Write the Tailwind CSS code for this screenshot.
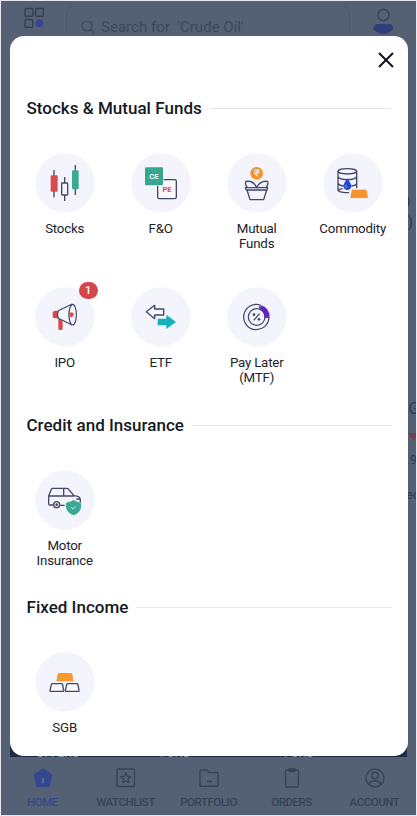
<!DOCTYPE html>
<html lang="en">
<head>
<meta charset="utf-8">
<title>Products</title>
<script src="https://cdn.jsdelivr.net/npm/@tailwindcss/browser@4"></script>
</head>
<body class="bg-[#e9eaf0] font-[Roboto,sans-serif]">
<div class="relative w-[417px] h-[816px] overflow-hidden pt-px px-px">
  <!-- Dimmed home screen -->
  <div class="flex flex-col h-[814px] bg-[#546073] text-[#2f3b50]">
    <header class="flex h-[60px] pl-[23px] pr-[21px] pt-[5px] justify-between">
      <svg class="w-[22px] h-[22px] mt-px" viewBox="0 0 22 22" fill="none" stroke="#333f55" stroke-width="1.4"><rect x="1" y="1.500" width="7.800" height="7.800" rx="1"/><rect x="11.500" y="1.500" width="7.800" height="7.800" rx="1"/><rect x="1" y="12.500" width="7.800" height="7.800" rx="1"/><circle cx="15.400" cy="16.200" r="3.800" fill="#334690" stroke="none"/></svg>
      <div class="flex gap-[6px] w-[284px] h-[50px] pl-[14px] pt-[10px] mr-px rounded-lg border border-[#4e5a6d] text-[#3c485b] text-[15px] tracking-[.02px] leading-[20px] whitespace-pre">
        <svg class="w-[14px] h-[14px] mt-[3px]" viewBox="0 0 14 14" fill="none" stroke="#3c485b" stroke-width="1.2"><circle cx="6" cy="6" r="5"/><path d="M9.700 9.700L13 13"/></svg><span>Search for  'Crude Oil'</span>
      </div>
      <svg class="w-[24px] h-[30px] mt-[1px]" viewBox="0 0 24 30"><circle cx="12.500" cy="8" r="5.600" fill="none" stroke="#333f55" stroke-width="1.2"/><path d="M5 17h15q2 2 2.500 5-5 5-10 5t-10.500-5q1-3 3-5z" fill="#2f4079"/></svg>
    </header>
    <main class="flex-1 flex flex-col items-end overflow-hidden text-[14px] leading-[20px]">
      <div class="h-[131px]"></div>
      <div class="h-5 mr-[6px]">0</div>
      <div class="h-5 mr-[3px]">%)</div>
      <div class="h-[167px]"></div>
      <div class="w-[17px] h-[20px] overflow-hidden text-[16px]">SGB</div>
      <div class="h-[28px] w-[8px] pt-[14px]"><svg class="w-3 h-2" viewBox="0 0 12 8"><path d="M0 0h12L6 8z" fill="#75404f"/></svg></div>
      <div class="h-[22px] w-[17px] overflow-hidden pt-[4px] text-[13px] leading-[18px]">1.95</div>
      <div class="w-[10px] h-[36px] pt-[16px] overflow-hidden text-[13px] leading-[20px]">ed</div>
      <div class="flex-1"></div>
      <div class="flex items-end w-[397px] h-[14px] mr-[9px] pl-[26px] bg-[#1c2b44] text-[#8490a2] text-[12px] leading-[8px] shrink-0"><span class="w-[124px]">OFFERS</span><span class="w-[124px]">FUND</span><span>FUND</span></div>
    </main>
    <nav class="grid grid-cols-5 h-[58px] text-[11.500px] font-medium leading-[14px] tracking-[-.45px] text-[#364257]">
      <div class="flex flex-col items-center pt-[11px] gap-[7px] text-[#34488f]"><svg class="w-5 h-5" viewBox="0 0 20 20"><path d="M9 .8q1-.7 2 0L18.500 6q1 .8.700 2l-2.200 9.500q-.3 1.500-1.800 1.500H4.800Q3.300 19 3 17.500L.8 8q-.3-1.200.7-2z" fill="#34488f"/><path d="M10 10v5" stroke="#7984a6" stroke-width="1.2"/></svg><span>HOME</span></div>
      <div class="flex flex-col items-center pt-[11px] gap-[7px]"><svg class="w-5 h-5" viewBox="0 0 20 20" fill="none" stroke="#364257" stroke-width="1.4"><rect x="1" y="1" width="17.500" height="17.500" rx="1"/><path stroke-linejoin="round" d="M9.800 5l1.500 3.200 3.400.5-2.500 2.400.6 3.400-3-1.600-3 1.600.6-3.400-2.500-2.400 3.400-.5z"/></svg><span>WATCHLIST</span></div>
      <div class="flex flex-col items-center pt-[11px] gap-[7px]"><svg class="w-5 h-5" viewBox="0 0 20 20" fill="none" stroke="#364257" stroke-width="1.4" stroke-linejoin="round"><path d="M2 2h6l2 2.500h8q1 0 1 1V17q0 1.300-1 1.300H2q-1 0-1-1.300V3q0-1 1-1zM8 13.500h5"/></svg><span>PORTFOLIO</span></div>
      <div class="flex flex-col items-center pt-[11px] gap-[7px]"><svg class="w-5 h-5" viewBox="0 0 20 20" fill="none" stroke="#364257" stroke-width="1.4"><rect x="3.500" y="2" width="13" height="17" rx="1.500"/><path d="M6 1.500Q6 .3 7.500.3h5q1.500 0 1.500 1.200 0 2.500-2 2.500H8Q6 4 6 1.500z" fill="#364257" stroke="none"/></svg><span>ORDERS</span></div>
      <div class="flex flex-col items-center pt-[11px] gap-[7px]"><svg class="w-5 h-5" viewBox="0 0 20 20" fill="none" stroke="#364257" stroke-width="1.4"><circle cx="10" cy="10" r="9"/><circle cx="10" cy="7.500" r="3.300"/><path d="M4 16.500q1.500-3.700 6-3.700t6 3.700"/></svg><span>ACCOUNT</span></div>
    </nav>
  </div>

  <!-- Product sheet -->
  <section class="absolute left-[9.500px] top-[36px] w-[398px] h-[719.500px] rounded-[14px] bg-white text-[#20242c]">
    <div class="flex justify-end h-[62px] pt-[16px] pr-[13.500px]">
      <svg class="w-[16px] h-[16px]" viewBox="0 0 16 16" fill="none" stroke="#10141c" stroke-width="2"><path d="M1 1l14 14M15 1L1 15"/></svg>
    </div>
    <div class="flex items-center gap-[9px] pl-[17px] pr-[17px] h-[20px]">
      <h2 class="text-[17px] font-medium tracking-[.02px] leading-[20px] text-[#151922] whitespace-nowrap">Stocks &amp; Mutual Funds</h2><div class="flex-1 h-px bg-[#e4e5e8]"></div>
    </div>
    <div class="grid grid-cols-4 w-[384px] ml-[7.200px] pt-[35px] text-center text-[13.300px] leading-[15px] tracking-[-.2px]">
      <div class="flex flex-col items-center h-[134px] gap-[8px]">
        <svg class="w-[60px] h-[60px] shrink-0" viewBox="46 188 180 180"><circle cx="136" cy="278" r="89" fill="#f4f5fc"/><g stroke="#41466c" stroke-width="4"><path d="M103 239v82M135 260v72M167 224v90"/><rect x="126" y="278" width="18" height="36" rx="2" fill="#f4f5fc"/></g><rect x="93" y="255" width="21" height="49" rx="3" fill="#d94a4d"/><rect x="157" y="240" width="20" height="57" rx="3" fill="#3aaa92"/></svg>
        <span>Stocks</span>
      </div>
      <div class="flex flex-col items-center h-[134px] gap-[8px]">
        <svg class="w-[60px] h-[60px] shrink-0" viewBox="333 188 180 180"><circle cx="423" cy="278" r="89" fill="#f4f5fc"/><rect x="413" y="268" width="56" height="57" rx="5" fill="#f9f9fd" stroke="#41466c" stroke-width="4"/><rect x="373" y="229" width="58" height="58" rx="3" fill="#f4f5fc"/><rect x="375" y="231" width="54" height="54" rx="3" fill="#38a58e"/><text x="402" y="266" font-size="23" font-weight="700" text-anchor="middle" fill="#e4f5f0" letter-spacing="0">CE</text><text x="441" y="305" font-size="23" font-weight="700" text-anchor="middle" fill="#d94a4d" letter-spacing="0">PE</text></svg>
        <span>F&amp;O</span>
      </div>
      <div class="flex flex-col items-center h-[134px] gap-[8px]">
        <svg class="w-[60px] h-[60px] shrink-0" viewBox="60 188 180 180"><circle cx="150" cy="278" r="89" fill="#f4f5fc"/><circle cx="149" cy="249" r="19" fill="#f7922c"/><path d="M141 240h16M141 247h16M145 240q9 0 9 4t-10 5l9 10" fill="none" stroke="#fff2df" stroke-width="3.500"/><g fill="none" stroke="#41466c" stroke-width="4" stroke-linejoin="round"><path d="M121 292q-8-11-4-19 24-2 32 19 9-21 32-19 5 8-4 19"/><path d="M115 292h67l-2 7h-62zM120 299l9 29h41l9-29"/></g></svg>
        <span>Mutual<br>Funds</span>
      </div>
      <div class="flex flex-col items-center h-[134px] gap-[8px]">
        <svg class="w-[60px] h-[60px] shrink-0" viewBox="347 188 180 180"><circle cx="437" cy="278" r="89" fill="#f4f5fc"/><g fill="none" stroke="#41466c" stroke-width="4"><ellipse cx="420" cy="243" rx="28" ry="8"/><path d="M392 243v57q5 7 33 7M448 243v51M392 259q5 9 28 9t28-9M392 279q4 7 17 8M432 287q12-1 16-6M392 300q6-4 14-5"/></g><path d="M420 264q-13 19-12 24 2 11 12 11t12-11q1-5-12-24z" fill="#2446d2"/><path d="M416 283q-4 7 3 10" stroke="#a6b5f5" stroke-width="2.500" fill="none"/><path d="M435 297h40q3 0 4 4l4 19q0 4-4 4h-48q-4 0-3-4l4-19q1-4 3-4z" fill="#f7922c" stroke="#f4f5fc" stroke-width="2"/></svg>
        <span>Commodity</span>
      </div>
      <div class="relative flex flex-col items-center h-[120px] gap-[8px]">
        <svg class="w-[60px] h-[60px] shrink-0" viewBox="46 36 180 180"><circle cx="136" cy="126" r="89" fill="#f4f5fc"/><path d="M116 131h13v30q0 4-4 4h-5q-4 0-4-4z" fill="#d94a4d"/><rect x="99" y="107" width="21" height="23" rx="8" fill="#d94a4d"/><g fill="#f4f5fc" stroke="#41466c" stroke-width="3.500" stroke-linejoin="round"><path d="M116 107q-5 12 0 23l40 19q-15-30 0-61z"/><ellipse cx="159" cy="119" rx="11" ry="31"/></g><path d="M152 112q10 0 10 7t-10 8q-2-8 0-15z" fill="#d94a4d"/></svg>
        <span>IPO</span>
        <div class="absolute left-[62px] top-[-5px] w-[19px] h-[17px] rounded-full bg-[#d5464a] text-white text-[11px] font-medium leading-[17px] tracking-normal">1</div>
      </div>
      <div class="flex flex-col items-center h-[120px] gap-[8px]">
        <svg class="w-[60px] h-[60px] shrink-0" viewBox="333 36 180 180"><circle cx="423" cy="126" r="89" fill="#f4f5fc"/><path d="M379 110l25-19v11h27v18h-27v11z" fill="#f8f8fd" stroke="#41466c" stroke-width="4" stroke-linejoin="round"/><path d="M413 131h26v-12l29 22-29 21v-11h-26z" fill="#16b1bd"/></svg>
        <span>ETF</span>
      </div>
      <div class="flex flex-col items-center h-[120px] gap-[8px]">
        <svg class="w-[60px] h-[60px] shrink-0" viewBox="60 36 180 180"><circle cx="150" cy="126" r="89" fill="#f4f5fc"/><g fill="none" stroke="#41466c" stroke-width="3.800"><path d="M160 90A38 38 0 1 0 186 127H172M160 90L157 101"/><circle cx="149" cy="126" r="25"/><path d="M140 136l18-20"/></g><circle cx="141" cy="119" r="4" fill="#41466c"/><circle cx="156" cy="133" r="4" fill="#41466c"/><path d="M163 91q24 8 25 34l-15 1q-2-17-16-23z" fill="#6225c4"/></svg>
        <span>Pay Later<br>(MTF)</span>
      </div>
    </div>

    <div class="flex items-center gap-[9px] pl-[17px] pr-[17px] h-[20px] mt-[8px]">
      <h2 class="text-[17px] font-medium tracking-[.02px] leading-[20px] text-[#151922] whitespace-nowrap">Credit and Insurance</h2><div class="flex-1 h-px bg-[#e4e5e8]"></div>
    </div>
    <div class="grid grid-cols-4 w-[384px] ml-[7.200px] pt-[35px] text-center text-[13.300px] leading-[15px] tracking-[-.2px]">
      <div class="flex flex-col items-center h-[127px] gap-[8px]">
        <svg class="w-[60px] h-[60px] shrink-0" viewBox="46 194 180 180"><circle cx="136" cy="284" r="89" fill="#f4f5fc"/><g fill="none" stroke="#41466c" stroke-width="4" stroke-linejoin="round"><path d="M100 299H91q-4 0-4-4V272l8-20q1-3 4-3h42q4 0 6 3l16 19q18 1 19 12v8M122 300h13M87 272h76M132 249v23M170 281h10"/><circle cx="111" cy="298" r="9"/></g><circle cx="111" cy="298" r="4" fill="#41466c"/><path d="M162 284q9 7 22 8v14q-2 16-22 24-21-8-23-24v-14q13-1 23-8z" fill="#3aa992"/><path d="M155 306l5 5 9-9" fill="none" stroke="#d9fff4" stroke-width="3"/></svg>
        <span>Motor<br>Insurance</span>
      </div>
    </div>

    <div class="flex items-center gap-[9px] pl-[17px] pr-[17px] h-[20px]">
      <h2 class="text-[17px] font-medium tracking-[.02px] leading-[20px] text-[#151922] whitespace-nowrap">Fixed Income</h2><div class="flex-1 h-px bg-[#e4e5e8]"></div>
    </div>
    <div class="grid grid-cols-4 w-[384px] ml-[7.200px] pt-[35px] text-center text-[13.300px] leading-[15px] tracking-[-.2px]">
      <div class="flex flex-col items-center gap-[8px]">
        <svg class="w-[60px] h-[60px] shrink-0" viewBox="46 185 180 180"><circle cx="136" cy="275" r="89" fill="#f4f5fc"/><path d="M118 248h35q4 0 5 3l3 22h-51l4-22q1-3 4-3z" fill="#f7982f"/><path d="M99 280h26q3 0 4 3l3 19q0 1-2 1H93q-2 0-2-2l4-18q1-3 4-3zM145 280h26q3 0 4 3l3 18q0 2-2 2h-37q-2 0-2-2l4-18q1-3 4-3z" fill="#fafaff" stroke="#41466c" stroke-width="4"/></svg>
        <span>SGB</span>
      </div>
    </div>
  </section>
</div>
</body>
</html>
